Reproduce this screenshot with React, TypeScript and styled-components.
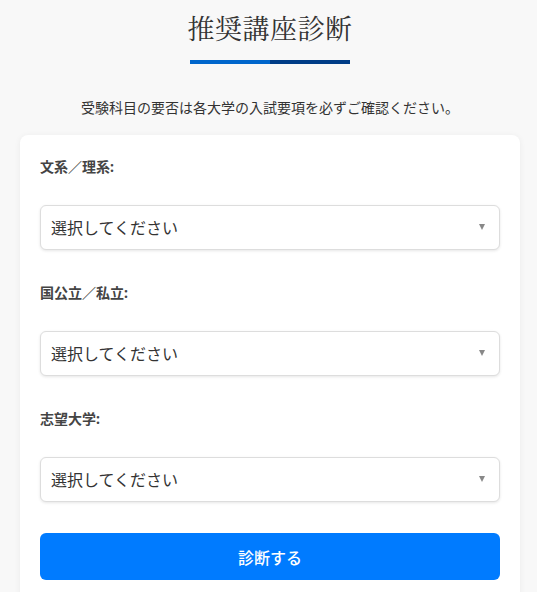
import React from "react";
import styled, { createGlobalStyle } from "styled-components";

const GlobalStyle = createGlobalStyle`
  html, body {
    margin: 0;
    padding: 0;
    background: #f8f8f8;
    font-family: "Noto Sans", "Noto Sans CJK JP", sans-serif;
    color: #333;
  }
`;

const Page = styled.div`
  width: 537px;
  padding: 0 17px 0 20px;
  box-sizing: border-box;
`;

const Header = styled.header`
  display: flex;
  flex-direction: column;
  align-items: center;
  padding-top: 8px;
`;

const Title = styled.h1`
  margin: 0;
  font-family: "Noto Serif CJK JP", "Liberation Serif", serif;
  font-weight: 400;
  font-size: 27px;
  line-height: 40px;
  color: #333;
  letter-spacing: 0.5px;
`;

const Underline = styled.div`
  display: flex;
  width: 160px;
  height: 4px;
  margin-top: 12px;
`;

const UnderlinePart = styled.span<{ $color: string }>`
  flex: 1;
  background: ${({ $color }) => $color};
`;

const Note = styled.p`
  margin: 34px 0 0;
  text-align: center;
  font-size: 14px;
  line-height: 20px;
  color: #333;
`;

const Card = styled.form`
  margin-top: 17px;
  background: #fff;
  border-radius: 8px;
  box-shadow: 0 1px 6px rgba(0, 0, 0, 0.06);
  padding: 22px 20px 24px;
`;

const Group = styled.div`
  display: flex;
  flex-direction: column;
  margin-bottom: 33px;
`;

const Label = styled.label`
  font-size: 14px;
  font-weight: 700;
  line-height: 20px;
  color: #444;
  margin-bottom: 28px;
`;

const SelectWrap = styled.div`
  position: relative;
`;

const Select = styled.select`
  appearance: none;
  width: 100%;
  height: 45px;
  box-sizing: border-box;
  border: 1px solid #ddd;
  border-radius: 6px;
  background: #fff;
  box-shadow: 0 1px 3px rgba(0, 0, 0, 0.1);
  padding: 0 30px 0 10px;
  font-family: "Noto Sans", "Noto Sans CJK JP", sans-serif;
  font-size: 16px;
  color: #333;
`;

const Arrow = styled.span`
  position: absolute;
  right: 15px;
  top: 19px;
  width: 0;
  height: 0;
  border-left: 3.5px solid transparent;
  border-right: 3.5px solid transparent;
  border-top: 6px solid #888;
  pointer-events: none;
`;

const Button = styled.button`
  display: block;
  width: 100%;
  height: 47px;
  margin-top: -2px;
  border: none;
  border-radius: 6px;
  background: #007bff;
  color: #fff;
  font-family: "Noto Sans", "Noto Sans CJK JP", sans-serif;
  font-size: 16px;
  font-weight: 500;
`;

const fields = ["文系／理系:", "国公立／私立:", "志望大学:"];

export default function App() {
  return (
    <>
      <GlobalStyle />
      <Page>
        <Header>
          <Title>推奨講座診断</Title>
          <Underline>
            <UnderlinePart $color="#0066cc" />
            <UnderlinePart $color="#003d87" />
          </Underline>
        </Header>
        <Note>受験科目の要否は各大学の入試要項を必ずご確認ください。</Note>
        <Card onSubmit={(e) => e.preventDefault()}>
          {fields.map((f) => (
            <Group key={f}>
              <Label>{f}</Label>
              <SelectWrap>
                <Select defaultValue="">
                  <option value="">選択してください</option>
                </Select>
                <Arrow />
              </SelectWrap>
            </Group>
          ))}
          <Button type="submit">診断する</Button>
        </Card>
      </Page>
    </>
  );
}
